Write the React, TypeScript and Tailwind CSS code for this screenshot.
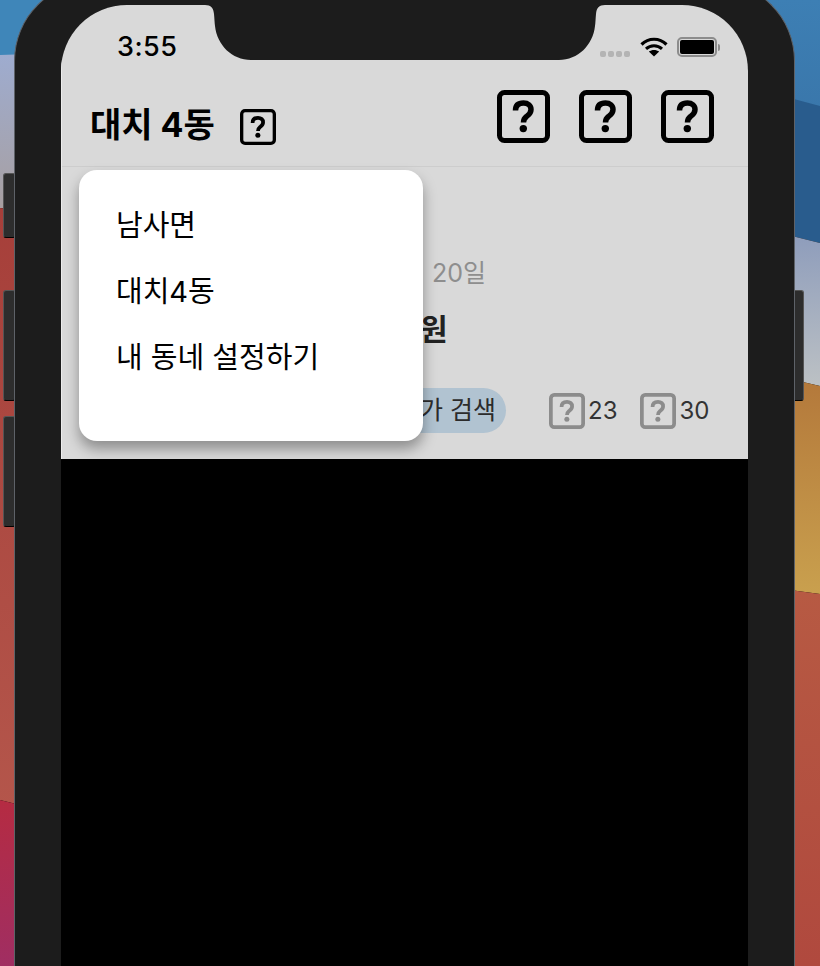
const FONT = "font-['Inter','Noto_Sans_CJK_KR',sans-serif]";

function QIcon({ size, stroke, color }: { size: number; stroke: number; color: string }) {
  const inset = stroke / 2;
  return (
    <svg width={size} height={size} viewBox="0 0 53 53" fill="none" className="shrink-0">
      <rect x={inset} y={inset} width={53 - stroke} height={53 - stroke} rx="5" stroke={color} strokeWidth={stroke} />
      <path
        d="M18.5 20.500C18.5 15 22 13 26.500 13C31 13 34 15.500 34 19.500C34 23.500 31.500 25 29.500 26.500C27.500 28 26.500 29.500 26.500 32.500"
        stroke={color}
        strokeWidth="5.500"
      />
      <circle cx="26.3" cy="38.6" r="3.7" fill={color} />
    </svg>
  );
}

function Wallpaper() {
  return (
    <svg width="820" height="966" viewBox="0 0 820 966" className="absolute inset-0">
      <defs>
        <linearGradient id="lav" x1="0" y1="0" x2="0" y2="1">
          <stop offset="0" stopColor="#9eacd0" />
          <stop offset="1" stopColor="#a89f9f" />
        </linearGradient>
        <linearGradient id="red" x1="0" y1="0" x2="0" y2="1">
          <stop offset="0" stopColor="#a63f3a" />
          <stop offset="1" stopColor="#b4564b" />
        </linearGradient>
        <linearGradient id="crimson" x1="0" y1="0" x2="0" y2="1">
          <stop offset="0" stopColor="#b52b42" />
          <stop offset="1" stopColor="#a02e62" />
        </linearGradient>
        <linearGradient id="blueR" x1="0" y1="0" x2="0" y2="1">
          <stop offset="0" stopColor="#3d7fb4" />
          <stop offset="1" stopColor="#3a77ab" />
        </linearGradient>
        <linearGradient id="lavR" x1="0" y1="0" x2="0" y2="1">
          <stop offset="0" stopColor="#8c9bbb" />
          <stop offset="1" stopColor="#bcc1c4" />
        </linearGradient>
        <linearGradient id="orange" x1="0" y1="0" x2="0" y2="1">
          <stop offset="0" stopColor="#b3773a" />
          <stop offset="1" stopColor="#c9a04e" />
        </linearGradient>
        <linearGradient id="redR" x1="0" y1="0" x2="0" y2="1">
          <stop offset="0" stopColor="#b75a43" />
          <stop offset="1" stopColor="#b0493e" />
        </linearGradient>
      </defs>
      <rect width="410" height="60" fill="#3f86b9" />
      <polygon points="0,55 60,53 60,215 0,208" fill="url(#lav)" />
      <polygon points="0,208 60,215 60,815 0,800" fill="url(#red)" />
      <polygon points="0,800 60,815 60,966 0,966" fill="url(#crimson)" />
      <rect x="410" width="410" height="110" fill="url(#blueR)" />
      <polygon points="760,90 820,106 820,243 760,228" fill="#295c8d" />
      <polygon points="760,228 820,243 820,386 760,372" fill="url(#lavR)" />
      <polygon points="760,372 820,386 820,594 760,586" fill="url(#orange)" />
      <polygon points="760,586 820,594 820,966 760,966" fill="url(#redR)" />
    </svg>
  );
}

function SideButton({ className }: { className: string }) {
  return <div className={`absolute rounded-[3px] border border-[#555] border-b-black bg-[#2d2d2d] ${className}`} />;
}

function StatusBar() {
  return (
    <div className="flex h-[60px] items-start text-black">
      <span className="ml-[55px] mt-[25px] text-[27px] leading-[34px] font-medium tracking-[0.5px]">3:55</span>
      <div className="ml-auto mr-[28px] mt-[31px] flex items-start">
        <div className="mt-[15px] mr-[10px] flex gap-[2px]">
          <span className="h-[6px] w-[6px] rounded-[2px] bg-[#b4b4b4]" />
          <span className="h-[6px] w-[6px] rounded-[2px] bg-[#b4b4b4]" />
          <span className="h-[6px] w-[6px] rounded-[2px] bg-[#b4b4b4]" />
          <span className="h-[6px] w-[6px] rounded-[2px] bg-[#b4b4b4]" />
        </div>
        <svg width="28" height="21" viewBox="0 0 28 21" fill="none" className="mr-[9px]">
          <path d="M1.5 8.5C8.5 1.5 19.5 1.5 26.5 8.5" stroke="black" strokeWidth="3.2" />
          <path d="M6 12.8C10.5 8.6 17.5 8.6 22 12.8" stroke="black" strokeWidth="3" />
          <path d="M14 20.5L8.8 15.6C11.8 13.4 16.2 13.4 19.2 15.6Z" fill="black" />
        </svg>
        <div className="mt-[1px] flex items-center">
          <div className="flex h-[20px] w-[40px] rounded-[5px] border-2 border-[#8c8c8c] p-[1px]">
            <div className="flex-1 rounded-[2px] bg-black" />
          </div>
          <div className="ml-[1px] h-[7px] w-[2px] rounded-r-sm bg-[#8c8c8c]" />
        </div>
      </div>
    </div>
  );
}

function Notch() {
  return (
    <svg width="400" height="55" viewBox="0 0 400 55" className="absolute left-[144px] top-0">
      <path
        d="M0 0C6 0 8.5 3 9 9C9.5 14 9.5 18 10 21C12 40 27 55 46 55H354C373 55 388 40 390 21C390.500 18 390.500 14 391 9C391.500 3 394 0 400 0Z"
        fill="#1c1c1c"
      />
    </svg>
  );
}

function Menu() {
  return (
    <div className="absolute left-[18px] top-[165px] h-[271px] w-[344px] rounded-[18px] bg-white pl-[37px] pt-[23px] text-[29px] text-black shadow-[0_8px_14px_rgba(0,0,0,0.35)]">
      <div className="flex h-[66px] items-center">남사면</div>
      <div className="flex h-[66px] items-center">대치4동</div>
      <div className="flex h-[66px] items-center">내 동네 설정하기</div>
    </div>
  );
}

export default function App() {
  return (
    <div className={`relative h-[966px] w-[820px] overflow-hidden bg-black ${FONT}`}>
      <Wallpaper />
      <SideButton className="left-[3px] top-[173px] h-[65px] w-[13px]" />
      <SideButton className="left-[3px] top-[290px] h-[111px] w-[13px]" />
      <SideButton className="left-[3px] top-[416px] h-[111px] w-[13px]" />
      <SideButton className="left-[792px] top-[290px] h-[111px] w-[12px]" />

      <div className="relative -mt-[19px] ml-[14px] flex h-[985px] w-[781px] flex-col rounded-t-[80px] border border-b-0 border-[#5e6268] bg-[#1c1c1c] px-[46px] pt-[23px]">
        <div className="relative flex-1 overflow-hidden rounded-t-[66px] bg-black">
          <div className="h-[454px] border-l border-[#ececec] bg-[#d9d9d9]">
            <StatusBar />
            <div className="flex h-[102px] items-center border-b border-[#cdcdcd] pl-[28px] pr-[34px]">
              <span className="mt-[18px] text-[34px] font-bold leading-none text-black">대치 4동</span>
              <div className="ml-[25px] mt-[22px]">
                <QIcon size={36} stroke={4.9} color="#000" />
              </div>
              <div className="ml-auto mt-[2px] flex gap-[29px]">
                <QIcon size={53} stroke={5} color="#000" />
                <QIcon size={53} stroke={5} color="#000" />
                <QIcon size={53} stroke={5} color="#000" />
              </div>
            </div>
            <div className="pt-[90px]">
              <div className="flex h-[34px] items-center pl-[370px] text-[25px] text-[#8e8e8e]">20일</div>
              <div className="mt-[16px] flex h-[44px] items-center pl-[358px] text-[30px] font-bold text-[#222]">원</div>
              <div className="mt-[37px] flex items-center">
                <div className="ml-[269px] flex h-[45px] w-[175px] items-center justify-end rounded-full bg-[#b1c3d1] pr-[10px] text-[25px] text-[#2b2b2b]">
                  가 검색
                </div>
                <div className="ml-[43px] flex items-center gap-[3px] text-[24px] text-[#333]">
                  <QIcon size={36} stroke={5.5} color="#8c8c8c" />
                  <span>23</span>
                </div>
                <div className="ml-[23px] flex items-center gap-[3px] text-[24px] text-[#333]">
                  <QIcon size={36} stroke={5.5} color="#8c8c8c" />
                  <span>30</span>
                </div>
              </div>
            </div>
          </div>
          <Notch />
          <Menu />
        </div>
      </div>
    </div>
  );
}
